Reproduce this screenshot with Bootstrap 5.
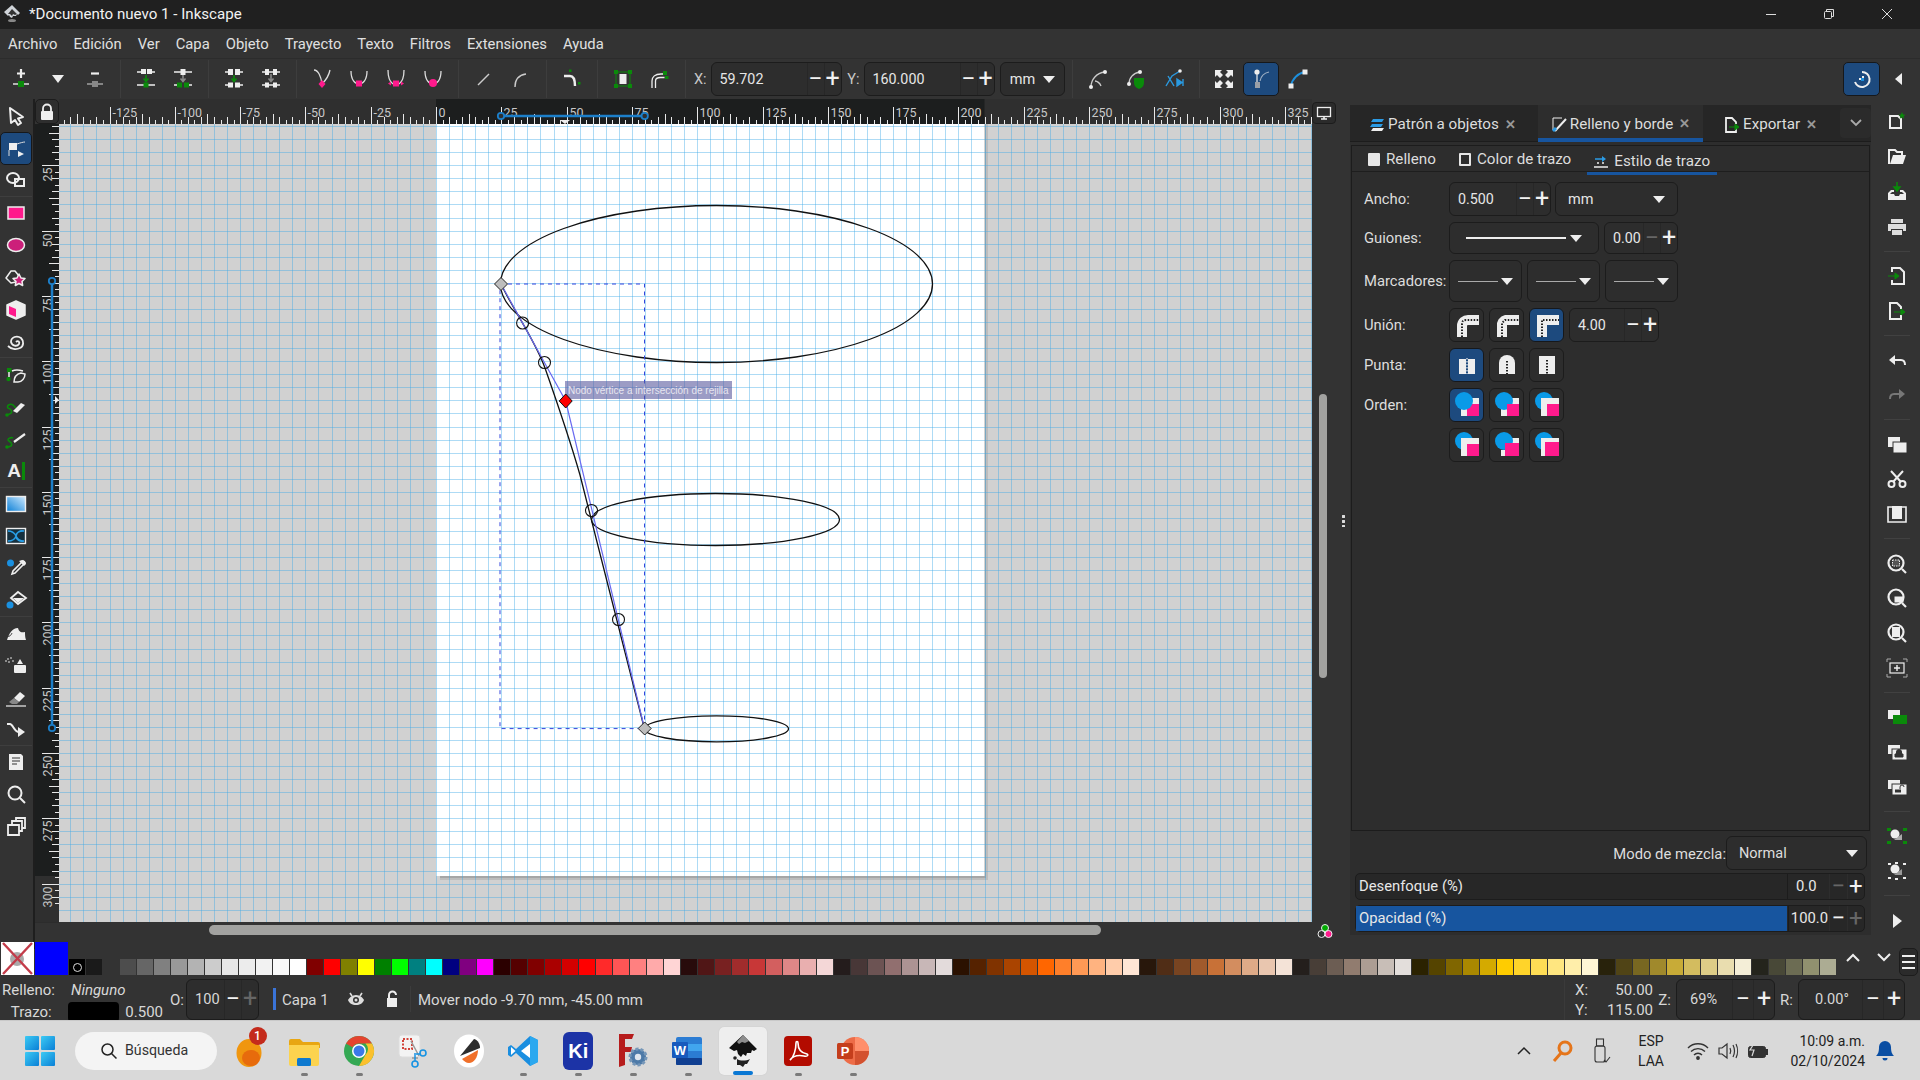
<!DOCTYPE html>
<html lang="es">
<head>
<meta charset="UTF-8">
<title>*Documento nuevo 1 - Inkscape</title>
<link href="https://cdn.jsdelivr.net/npm/bootstrap@5.3.0/dist/css/bootstrap.min.css" rel="stylesheet">
<style>
html, body { margin: 0; height: 1080px; overflow: hidden; }
body { width: 1920px; background: #333; color: #e6e6e6; font-family: Roboto, "Liberation Sans", sans-serif; font-size: 14px; line-height: 1.2; }
svg { display: block; flex: none; }
.app { width: 1920px; height: 1080px; }
.titlebar { height: 29px; background: #202020; color: #f2f2f2; padding: 0 4px 0 3px; }
.title-text { margin-left: 8px; font-size: 15.1px; }
.winctl { width: 58px; height: 28px; }
.menubar { height: 30px; padding: 2px 0 0 8px; background: #333; gap: 16px; font-size: 14.8px; color: #e0e0e0; }
.cmdbar { height: 41px; padding-left: 2.5px; background: #333; border-top: 1px solid #2c2c2c; }
.cbtn { width: 37px; height: 34px; border-radius: 5px; flex: none; }
.cbtn.on, .tool.on, .ibtn.on { background: #1d4a7e; border: 1px solid #16181b; }
.csep { width: 1px; height: 38px; margin: 0 6.5px; background: #3d3d3d; flex: none; }
.clabel { color: #c8c8c8; font-size: 14.5px; text-align: right; padding-top: 1px; }
.spin { height: 34px; background: #2d2d2d; border: 1px solid #1c1c1c; border-radius: 6px; font-size: 14.3px; flex: none; }
.spin .val { flex: 1 1 auto; padding: 1px 0 0 8px; }
.spin .val.zoomval { padding-left: 13px; }
.spin i, .slide i { font-style: normal; display: flex; align-items: center; justify-content: center; width: 17px; height: 100%; border-left: 1px solid #272727; font-size: 25px; font-weight: 400; color: #f2f2f2; flex: none; }
.spin i.off, .slide i.off { color: #666; }
.drop { height: 34px; background: #2d2d2d; border: 1px solid #1c1c1c; border-radius: 6px; font-size: 14.5px; flex: none; }
.caret { width: 0; height: 0; border-left: 6px solid transparent; border-right: 6px solid transparent; border-top: 7px solid #eee; flex: none; }
.mainrow { height: 850px; }
.toolstrip { width: 35px; padding: 1px 1px 0 0; background: #333; border-right: 2px solid #1e1e1e; flex: none; }
.tool { width: 32px; height: 32.3px; flex: none; border-radius: 5px; }
.tool.sep { border-bottom: 1px solid #3e3e3e; border-radius: 0; }
.tool.txt { font: bold 19px "Liberation Sans", sans-serif; color: #eee; gap: 1px; }
.tool.txt b { width: 3px; height: 18px; background: #0a8a0a; }
.workarea { width: 1315px; display: grid; grid-template-columns: 24px 1253px 38px; grid-template-rows: 25px 798px 27px; flex: none; }
.cornerlock { background: #2e2e2e; border: 1px solid #1c1c1c; border-radius: 5px; }
.vbar { background: #333; position: relative; }
.vthumb { width: 8px; height: 284px; margin: 270px 0 0 7px; background: #a2a2a0; border-radius: 4px; }
.dots { position: absolute; right: 5px; top: 390px; width: 3px; height: 13px; background: radial-gradient(circle, #ddd 1.4px, transparent 1.6px) 0 0 / 3px 5px; }
.monbtn { width: 24px; height: 22px; margin-top: 3px; background: #2b2b2b; border: 1px solid #1c1c1c; border-radius: 4px; }
.hbar { background: #333; }
.hthumb { width: 892px; height: 10px; margin: 3px 0 0 150px; background: #a2a2a0; border-radius: 5px; }
.panel { width: 521px; height: 830px; margin-top: 6px; background: #2d2d2d; flex: none; }
.ptabs { height: 37px; background: #262626; border-bottom: 1px solid #1c1c1c; font-size: 15.2px; position: relative; flex: none; }
.ptab { height: 37px; padding-top: 2px; gap: 3px; color: #ddd; }
.ptab.now { border-bottom: 4px solid #17559f; background: #2d2d2d; padding-top: 5px; }
.xmark { color: #999; font-size: 13px; font-weight: 700; margin-left: 3px; }
.pmore { width: 31px; height: 30px; background: #2b2b2b; border-radius: 4px; margin: 3px 0 0 auto; }
.subbox { height: 686px; margin: 3px 1px 0 1px; border: 1px solid #1c1c1c; flex: none; }
.subtabs { height: 26px; border-bottom: 1px solid #1e1e1e; font-size: 15.2px; padding: 2px 0 0 16px; color: #ddd; }
.subtab { gap: 6px; height: 26px; margin-right: 23px; }
.subtab.now { border-bottom: 3px solid #17559f; padding: 3px 7px 0 7px; margin: 0 0 -3px -7px; height: 28px; }
.chk { width: 12px; height: 13px; border: 2px solid #e6e6e6; border-radius: 1px; }
.chk.full { background: #e6e6e6; }
.frm { padding: 10px 0 0 12px; gap: 6px; }
.frow { gap: 5px; font-size: 14.8px; }
.flabel { width: 80px; color: #ddd; padding-top: 2px; }
.ibtn { width: 35px; height: 34px; background: #2d2d2d; border: 1px solid #1c1c1c; border-radius: 6px; flex: none; }
.ibtn.on { background: #1d4a7e; }
.dline { flex: none; background: #eee; }
.dline.thin { background: #aaa; }
.modorow { height: 34px; margin-top: 5px; padding-right: 4px; font-size: 14.8px; color: #ddd; justify-content: flex-end; flex: none; }
.modorow > span { padding-top: 3px; }
.drop > .ps-1 { padding-top: 1px; }
.sliders { padding: 3px 6px 0 5px; gap: 5px; }
.slide { height: 27px; border: 1px solid #1c1c1c; border-radius: 5px; background: #272727; font-size: 14.8px; color: #e8e8e8; }
.slide .fill { width: 431px; height: 100%; flex: none; padding-left: 3px; }
.slide .fill.blue { background: #17559f; margin-right: 1px; }
.slide .num { width: 43px; flex: 1 1 auto; padding-right: 1px; border-left: 1px solid #1c1c1c; height: 100%; }
.slide i { width: 17.5px; border-left-color: #2d2d2d; font-size: 24px; }
.rstrip { width: 49px; padding: 6px 0 0 2px; background: #333; flex: none; }
.rbtn { width: 47px; height: 34.8px; flex: none; }
.rsep { width: 26px; height: 1px; margin: 6.8px 0; background: #414141; flex: none; }
.palette { height: 28px; background: #333; flex: none; }
.xswatch { width: 33px; height: 33px; margin: -7px 0 0 1px; background: #fff; flex: none; }
.bswatch { width: 33px; height: 33px; margin: -7px 0 0 1px; background: #00f; flex: none; }
.swatches { margin: 10px 0 0 1px; width: 1768px; height: 16px; flex: none; }
.swatches span { display: block; width: 16px; height: 16px; margin-right: 1px; flex: none; }
.swatches span:first-child { display: flex; align-items: center; justify-content: center; }
.ring { width: 9px; height: 9px; border: 1px solid #ddd; border-radius: 50%; }
.palarrow { width: 31px; }
.palmenu { width: 19px; height: 28px; margin-top: -1px; background: #2b2b2b; border: 1px solid #1c1c1c; border-radius: 5px; }
.statusbar { height: 43px; background: #333; font-size: 15px; color: #d8d8d8; border-top: 1px solid #333; flex: none; }
.statusbar > span { padding-top: 2px; }
.st-fill { width: 163px; position: relative; padding-top: 4px; }
.st-line { height: 22px; }
.st-label { width: 55px; text-align: right; margin-right: 16px; }
.stroke-sw { width: 55px; height: 20px; background: #000; border-radius: 4px; margin-right: 6px; }
.statusbar .spin { height: 41px; font-size: 14.6px; }
.layerbar { width: 3px; height: 22px; background: #3a74d8; margin: 0 6px 0 14px; }
.st-coords { width: 89px; padding: 2px 0 0 10px; border-left: 1px solid #3a3a3a; height: 41px; }
.taskbar { height: 60px; background: #d9d9d9; color: #1c1c1c; border-top: 1px solid #c9c9c9; position: relative; flex: none; }
.winlogo { width: 30px; height: 30px; margin: 0 20px 0 25px; display: grid; grid-template-columns: 14px 14px; gap: 2px; }
.winlogo span { background: linear-gradient(135deg, #3ccbf4, #0a7fd6); border-radius: 1px; }
.searchpill { width: 142px; height: 38px; background: #f4f4f4; border-radius: 19px; gap: 7px; padding-left: 25px; font-size: 14.2px; color: #333; margin-right: 4.500px; }
.tslot { width: 54.9px; height: 60px; position: relative; flex: none; }
.tslot.now { background: #eee; border-radius: 5px; height: 48px; width: 48px; margin: 0 3.45px; box-shadow: 0 0 1px #bbb; }
.tdot { position: absolute; left: 50%; bottom: 5px; width: 7px; height: 3px; margin-left: -3px; background: #7a7a7a; border-radius: 2px; }
.tslot.now .tdot { bottom: 0; width: 20px; height: 4px; margin-left: -10px; background: #0a78d4; }
.tbadge { position: absolute; left: 27px; top: 6px; width: 18px; height: 18px; border-radius: 50%; background: #c42b1c; color: #fff; font-size: 12px; font-weight: 500; text-align: center; line-height: 18px; }
.tray { margin-left: auto; }
.trayslot { height: 60px; }
.langs { width: 60px; font-size: 14px; line-height: 20px; text-align: center; color: #222; }
.clock { width: 95px; padding-right: 3px; text-align: right; font-size: 14px; line-height: 20px; color: #222; }
</style>
</head>
<body>
<div class="app d-flex flex-column">

  <!-- barra de titulo -->
  <div class="titlebar d-flex align-items-center">
    <svg width="18" height="20" viewBox="0 0 18 20"><path d="M9 1l8 8-2 2-1-1-1 2-3 0-1 2-2-1-1-2-1 1-4-4z" fill="#cfd3d8"/><path d="M9 5l5 5-2 1-2-1-1 2-2-2-2 0z" fill="#333"/><ellipse cx="9" cy="16.5" rx="4" ry="1.6" fill="#888"/></svg>
    <span class="title-text flex-grow-1">*Documento nuevo 1 - Inkscape</span>
    <div class="winctl d-flex align-items-center justify-content-center"><svg width="12" height="12"><path d="M1 6.5h10" stroke="#ddd"/></svg></div>
    <div class="winctl d-flex align-items-center justify-content-center"><svg width="12" height="12" fill="none" stroke="#ddd"><rect x="1.5" y="3.5" width="7" height="7" rx="1"/><path d="M3.5 3V1.5h7v7H9"/></svg></div>
    <div class="winctl d-flex align-items-center justify-content-center"><svg width="12" height="12" stroke="#ddd"><path d="M1 1l10 10M11 1L1 11"/></svg></div>
  </div>

  <!-- menu -->
  <div class="menubar d-flex align-items-center">
    <span>Archivo</span><span>Edición</span><span>Ver</span><span>Capa</span><span>Objeto</span><span>Trayecto</span><span>Texto</span><span>Filtros</span><span>Extensiones</span><span>Ayuda</span>
  </div>

  <!-- barra de herramientas de nodos -->
  <div class="cmdbar d-flex align-items-center">
    <div class="cbtn d-flex align-items-center justify-content-center"><svg width="24" height="24"><path d="M12 2v9M8 6.5h8" stroke="#eee" stroke-width="2.2"/><path d="M4 17h16" stroke="#eee" stroke-width="1.4"/><rect x="9" y="14" width="6" height="6" fill="#0a8a0a"/></svg></div>
    <div class="cbtn d-flex align-items-center justify-content-center"><svg width="14" height="10"><path d="M1 1h12L7 9z" fill="#eee"/></svg></div>
    <div class="cbtn d-flex align-items-center justify-content-center"><svg width="24" height="24"><path d="M8 6.5h8" stroke="#eee" stroke-width="2.2"/><path d="M4 17h16" stroke="#aaa" stroke-width="1.4"/><rect x="9" y="14" width="6" height="6" fill="#888"/></svg></div>
    <div class="csep"></div>
    <div class="cbtn d-flex align-items-center justify-content-center"><svg width="24" height="24"><path d="M3 5h6M15 5h6M3 18h18" stroke="#eee" stroke-width="1.4"/><rect x="7" y="2" width="5" height="5" fill="#eee"/><rect x="13" y="2" width="5" height="5" fill="#eee"/><path d="M12 8v6M9.5 11.5L12 14.5l2.500-3" stroke="#0a8a0a" stroke-width="1.6" fill="none"/><rect x="9.500" y="15.500" width="5" height="5" fill="#0a8a0a"/></svg></div>
    <div class="cbtn d-flex align-items-center justify-content-center"><svg width="24" height="24"><path d="M3 5h18M3 18h6M15 18h6" stroke="#eee" stroke-width="1.4"/><rect x="9.500" y="2" width="5" height="6" fill="#eee"/><path d="M12 8v6M9.500 11.500L12 14.500l2.500-3" stroke="#888" stroke-width="1.600" fill="none"/><rect x="6" y="15.500" width="5" height="5" fill="#0a8a0a"/><rect x="13" y="15.500" width="5" height="5" fill="#0a8a0a"/></svg></div>
    <div class="csep"></div>
    <div class="cbtn d-flex align-items-center justify-content-center"><svg width="24" height="24"><path d="M3 5h6M15 5h6M3 18h6M15 18h6" stroke="#eee" stroke-width="1.4"/><rect x="6" y="2" width="5" height="6" fill="#eee"/><rect x="13" y="2" width="5" height="6" fill="#eee"/><path d="M12 8v6M9.500 11.500L12 14.500l2.500-3" stroke="#0a8a0a" stroke-width="1.600" fill="none"/><rect x="6" y="15.500" width="5" height="5" fill="#eee"/><rect x="13" y="15.500" width="5" height="5" fill="#eee"/></svg></div>
    <div class="cbtn d-flex align-items-center justify-content-center"><svg width="24" height="24"><path d="M3 5h18M3 18h18" stroke="#eee" stroke-width="1.4"/><rect x="6" y="2" width="4" height="6" fill="#eee"/><rect x="14" y="2" width="4" height="6" fill="#eee"/><path d="M12 7v7M9.500 11.500L12 14.500l2.500-3" stroke="#888" stroke-width="1.600" fill="none"/><rect x="6" y="15.500" width="4" height="5" fill="#eee"/><rect x="14" y="15.500" width="4" height="5" fill="#eee"/></svg></div>
    <div class="csep"></div>
    <div class="cbtn d-flex align-items-center justify-content-center"><svg width="24" height="24" fill="none" stroke="#ddd" stroke-width="1.300"><path d="M4 3c4 0 7 6 8 14M20 3c-1 5-4 10-8 14"/><path d="M12 13l3.500 4-3.500 4-3.500-4z" fill="#ff1a8c" stroke="none"/></svg></div>
    <div class="cbtn d-flex align-items-center justify-content-center"><svg width="24" height="24" fill="none" stroke="#ddd" stroke-width="1.300"><path d="M4 4c0 9 4 13 8 13s8-4 8-13"/><rect x="9" y="13.500" width="6" height="6" fill="#ff1a8c" stroke="none"/></svg></div>
    <div class="cbtn d-flex align-items-center justify-content-center"><svg width="24" height="24" fill="none" stroke="#ddd" stroke-width="1.300"><path d="M4 3c0 8 2 12 5 14M20 3c0 8-2 12-5 14"/><rect x="9" y="13.500" width="6" height="6" fill="#ff1a8c" stroke="none"/><path d="M4 16.500l3-2v4zM20 16.500l-3-2v4z" fill="#ff1a8c" stroke="none"/></svg></div>
    <div class="cbtn d-flex align-items-center justify-content-center"><svg width="24" height="24" fill="none" stroke="#ddd" stroke-width="1.300"><path d="M4 4c0 9 4 13 8 13s8-4 8-13"/><circle cx="12" cy="16" r="4" fill="#ff1a8c" stroke="none"/></svg></div>
    <div class="csep"></div>
    <div class="cbtn d-flex align-items-center justify-content-center"><svg width="24" height="24"><path d="M6 18L17 7" stroke="#ccc" stroke-width="1.400"/></svg></div>
    <div class="cbtn d-flex align-items-center justify-content-center"><svg width="24" height="24" fill="none"><path d="M6 20c0-8 4-12 11-13" stroke="#ccc" stroke-width="1.400"/></svg></div>
    <div class="csep"></div>
    <div class="cbtn d-flex align-items-center justify-content-center"><svg width="24" height="24" fill="none"><path d="M4 9h6c3 0 5 3 5 10" stroke="#eee" stroke-width="2.400"/><rect x="9" y="2.500" width="2.500" height="2.500" fill="#0a8a0a"/><rect x="18" y="15" width="2.500" height="2.500" fill="#0a8a0a"/></svg></div>
    <div class="csep"></div>
    <div class="cbtn d-flex align-items-center justify-content-center"><svg width="24" height="24"><rect x="5" y="5" width="14" height="14" fill="none" stroke="#0a8a0a" stroke-width="1"/><rect x="8.500" y="7" width="7" height="10" fill="#eee"/><g fill="#0a8a0a"><rect x="3" y="3" width="4" height="4"/><rect x="17" y="3" width="4" height="4"/><rect x="3" y="17" width="4" height="4"/><rect x="17" y="17" width="4" height="4"/></g></svg></div>
    <div class="cbtn d-flex align-items-center justify-content-center"><svg width="24" height="24" fill="none" stroke="#eee" stroke-width="1.300"><path d="M4 21v-7c0-4 3-7 9-7h4M7.500 21v-7c0-2 2-3.500 5-3.500h4"/><rect x="15" y="4" width="4" height="4" fill="#0a8a0a" stroke="none"/><rect x="17" y="9" width="3.500" height="3" fill="#0a8a0a" stroke="none"/></svg></div>
    <div class="csep"></div>
    <span class="clabel me-1" style="width:14px">X:</span>
    <div class="spin d-flex align-items-center" style="width:131px"><span class="val">59.702</span><i>−</i><i>+</i></div>
    <span class="clabel pe-1" style="width:22px">Y:</span>
    <div class="spin d-flex align-items-center" style="width:131px"><span class="val">160.000</span><i>−</i><i>+</i></div>
    <div class="drop d-flex align-items-center justify-content-center gap-2" style="width:65px;margin-left:5.5px">mm <span class="caret"></span></div>
    <div class="csep"></div>
    <div class="cbtn d-flex align-items-center justify-content-center" style="width:38px"><svg width="24" height="24" fill="none" stroke="#ccc" stroke-width="1.300"><path d="M5 20c0-7 5-14 14-15M9 14c2 0 5 2 6 5"/><circle cx="5" cy="20" r="2" fill="#eee" stroke="none"/><circle cx="19" cy="5" r="2" fill="#eee" stroke="none"/></svg></div>
    <div class="cbtn d-flex align-items-center justify-content-center" style="width:38px"><svg width="24" height="24" fill="none" stroke="#ccc" stroke-width="1.300"><path d="M5 17c0-6 4-11 11-12"/><circle cx="5" cy="17" r="2" fill="#eee" stroke="none"/><circle cx="16" cy="5" r="2" fill="#eee" stroke="none"/><path d="M10 11h10v5c0 3-2 5-5 6-3-1-5-3-5-6z" fill="#0a8a0a" stroke="none"/></svg></div>
    <div class="cbtn d-flex align-items-center justify-content-center" style="width:38px"><svg width="24" height="24" fill="none" stroke="#2a9ae0" stroke-width="1.400"><path d="M4 19l6-10 8-5M6 9l6 10"/><circle cx="18" cy="4" r="1.800" fill="#eee" stroke="none"/><path d="M15 12v7l5-3.500zM21 12v7" fill="#2a9ae0"/></svg></div>
    <div class="csep" style="margin-left:6px"></div>
    <div class="cbtn d-flex align-items-center justify-content-center" style="width:35px"><svg width="22" height="22" fill="#eee"><path d="M2 2h7L7 4l3 3-3 3-3-3-2 2zM20 2v7l-2-2-3 3-3-3 3-3-2-2zM2 20v-7l2 2 3-3 3 3-3 3 2 2zM20 20h-7l2-2-3-3 3-3 3 3 2-2z"/></svg></div>
    <div class="cbtn on d-flex align-items-center justify-content-center" style="width:36px;margin-left:1.5px"><svg width="24" height="24" fill="none"><path d="M11 14c1-5 4-8 9-9" stroke="#9fb0c4" stroke-width="1.200"/><circle cx="8" cy="5" r="2.600" fill="#eee"/><path d="M8 6v10" stroke="#eee" stroke-width="1.200"/><rect x="6" y="15" width="5" height="6" fill="#9a9fa6"/></svg></div>
    <div class="cbtn d-flex align-items-center justify-content-center"><svg width="24" height="24" fill="none"><path d="M5 19c1-7 7-13 14-14" stroke="#1d8fdc" stroke-width="1.800"/><rect x="2.500" y="16.500" width="5" height="5" fill="#eee"/><rect x="16.500" y="2.500" width="5" height="5" fill="#eee"/></svg></div>
    <div class="flex-grow-1"></div>
    <div class="cbtn on d-flex align-items-center justify-content-center"><svg width="22" height="22" fill="none"><path d="M11 4a7.500 7.500 0 1 1-7 10" stroke="#eee" stroke-width="2"/><path d="M8 11h4v-3" stroke="#eee" stroke-width="2"/><rect x="10" y="10" width="3" height="3" fill="#1d8fdc"/></svg></div>
    <div class="cbtn d-flex align-items-center justify-content-center" style="margin-right:3px"><svg width="10" height="12"><path d="M8 0v12L1 6z" fill="#eee"/></svg></div>
  </div>

  <div class="mainrow d-flex">
    <!-- herramientas -->
    <div class="toolstrip d-flex flex-column align-items-center">
      <div class="tool d-flex align-items-center justify-content-center"><svg width="22" height="22" fill="none" stroke="#eee" stroke-width="2" stroke-linejoin="round"><path d="M5 3l13 9-5 1.500 3 4.500-3 2-3-5-4 3z"/></svg></div>
      <div class="tool on d-flex align-items-center justify-content-center"><svg width="24" height="22" fill="none"><rect x="5" y="6" width="8" height="7" fill="#eee"/><path d="M13 7c3-1 6-2 8-2M5 13v6" stroke="#ddd"/><path d="M14 14l6 3-6 3z" fill="#eee"/></svg></div>
      <div class="tool sep d-flex align-items-center justify-content-center"><svg width="24" height="22" fill="none" stroke="#eee" stroke-width="2"><ellipse cx="9" cy="9" rx="6" ry="5"/><rect x="11" y="10" width="9" height="7"/></svg></div>
      <div class="tool d-flex align-items-center justify-content-center"><svg width="22" height="22"><rect x="3" y="5" width="16" height="12" fill="#ff1a8c" stroke="#eee" stroke-width="1.500"/></svg></div>
      <div class="tool d-flex align-items-center justify-content-center"><svg width="22" height="22"><ellipse cx="11" cy="11" rx="8.500" ry="6.500" fill="#cc1f7a" stroke="#eee" stroke-width="1.500"/></svg></div>
      <div class="tool d-flex align-items-center justify-content-center"><svg width="24" height="22" stroke="#eee" stroke-width="1.500" stroke-linejoin="round"><path d="M7 4l4 0 4 5-3 6-5 1-5-5z" fill="none"/><path d="M15 7l2 4 4 .5-3 3 .7 4-3.700-2-3.700 2 .7-4-3-3 4-.5z" fill="#cc1f7a"/></svg></div>
      <div class="tool d-flex align-items-center justify-content-center"><svg width="22" height="22" stroke="#eee" stroke-width="1.500" stroke-linejoin="round"><path d="M11 2l9 4v10l-9 4-9-4V6z" fill="#eee"/><path d="M11 10L4 7v8l7 3z" fill="#ff1a8c" stroke="none"/><path d="M11 10l7-3v8l-7 3z" fill="#eee" stroke="none"/></svg></div>
      <div class="tool sep d-flex align-items-center justify-content-center"><svg width="22" height="22" fill="none" stroke="#eee" stroke-width="1.800"><path d="M11 11c2-2 4 0 3 2-2 3-7 2-8-2 0-5 6-7 10-4 3 3 3 8-1 10-4 2-9 1-12-2"/></svg></div>
      <div class="tool d-flex align-items-center justify-content-center"><svg width="24" height="22" fill="none" stroke="#eee" stroke-width="1.500"><rect x="3" y="4" width="4.500" height="4.500" fill="#0a8a0a" stroke="none"/><circle cx="4.500" cy="15" r="2.200" fill="#0a8a0a" stroke="none"/><path d="M5 8v5M8 7c4-2 8-1 11 0"/><path d="M10 18c0-5 3-8 7-9l4 1c0 4-3 8-7 8z"/></svg></div>
      <div class="tool d-flex align-items-center justify-content-center"><svg width="24" height="22" fill="none"><path d="M3 19c8-2 4-6 1-7-2-2 2-5 5-3l3 3" stroke="#0a8a0a" stroke-width="1.600"/><circle cx="3" cy="19" r="1.800" fill="#0a8a0a"/><path d="M9 15l8-8 4 2-8 8z" fill="#eee"/></svg></div>
      <div class="tool d-flex align-items-center justify-content-center"><svg width="24" height="22" fill="none"><path d="M3 19c7-1 5-4 2-6s2-4 4-3" stroke="#0a8a0a" stroke-width="1.600"/><circle cx="3" cy="19" r="1.800" fill="#0a8a0a"/><path d="M10 14L21 6" stroke="#eee" stroke-width="2.200"/></svg></div>
      <div class="tool sep txt d-flex align-items-center justify-content-center">A<b></b></div>
      <div class="tool d-flex align-items-center justify-content-center"><svg width="24" height="20"><defs><linearGradient id="gr1" x1="0" y1="1" x2="1" y2="0"><stop offset="0" stop-color="#0a7fd6"/><stop offset="1" stop-color="#cfeaff"/></linearGradient></defs><rect x="2.500" y="2.500" width="19" height="15" fill="url(#gr1)" stroke="#eee" stroke-width="1.400"/></svg></div>
      <div class="tool d-flex align-items-center justify-content-center"><svg width="24" height="20"><rect x="2.500" y="2.500" width="19" height="15" fill="#15303f" stroke="#eee" stroke-width="1.400"/><path d="M4 5c5 0 7 3 8 5s4 5 8 5c-4 1-8-1-8-5 0-4 4-5 8-5-4-1-7 1-8 5-1 3-4 5-8 5" fill="none" stroke="#29a0e8" stroke-width="1.400"/></svg></div>
      <div class="tool d-flex align-items-center justify-content-center"><svg width="24" height="22"><circle cx="6.500" cy="6" r="3.500" fill="#1a90e0"/><path d="M19 4l2 2-3 3-7 7-3 1 1-3 7-7z" fill="none" stroke="#eee" stroke-width="1.600"/><path d="M15 4l5 5 2-2-1-3-3-1z" fill="#eee"/></svg></div>
      <div class="tool sep d-flex align-items-center justify-content-center"><svg width="24" height="22"><circle cx="6" cy="16" r="3.500" fill="#1a90e0"/><path d="M14 3l8 6-8 6-7-6z" fill="none" stroke="#eee" stroke-width="1.800"/><path d="M9 9h11l-6 5z" fill="#eee"/></svg></div>
      <div class="tool d-flex align-items-center justify-content-center"><svg width="24" height="22"><path d="M3 18c2-6 5-12 11-12 1 3 2 5 7 4 0 3 0 5 1 8z" fill="#eee"/><path d="M3 14c3 1 4-1 5-3" stroke="#333" fill="none"/></svg></div>
      <div class="tool d-flex align-items-center justify-content-center"><svg width="24" height="22"><rect x="10" y="11" width="12" height="8" rx="1" fill="#eee"/><path d="M13 10l3-5 3 5z" fill="#eee"/><g fill="#aaa"><circle cx="4" cy="5" r="1"/><circle cx="7" cy="4" r="1"/><circle cx="9" cy="7" r="1"/><circle cx="5" cy="8" r="1"/><circle cx="2" cy="7" r="1"/></g></svg></div>
      <div class="tool d-flex align-items-center justify-content-center"><svg width="24" height="22"><path d="M10 11l6-6 5 4-6 6z" fill="#eee"/><path d="M10 11l5 4-2 2H8l-3-2z" fill="#888"/><path d="M2 19h20" stroke="#eee" stroke-width="1.200"/></svg></div>
      <div class="tool sep d-flex align-items-center justify-content-center"><svg width="24" height="22" fill="none"><path d="M3 6h3c3 0 4 8 9 8" stroke="#eee" stroke-width="2"/><path d="M14 9l7 5-7 5z" fill="#eee"/></svg></div>
      <div class="tool d-flex align-items-center justify-content-center"><svg width="22" height="22"><path d="M4 3h12l2 2v14H4z" fill="#eee"/><path d="M7 7h8M7 10h8M7 13h5" stroke="#333" stroke-width="1.200"/></svg></div>
      <div class="tool d-flex align-items-center justify-content-center"><svg width="22" height="22" fill="none" stroke="#eee" stroke-width="2"><circle cx="10" cy="10" r="6.500"/><path d="M15 15l5 5"/></svg></div>
      <div class="tool d-flex align-items-center justify-content-center"><svg width="22" height="22" fill="none" stroke="#eee" stroke-width="1.800"><path d="M3 9h11v10H3zM7 9V5h10v10h-3M11 5V2h9v10h-3"/></svg></div>
    </div>

    <!-- lienzo con reglas -->
    <div class="workarea">
      <div class="cornerlock d-flex align-items-center justify-content-center"><svg width="16" height="18"><path d="M4 9V5.500a4 4 0 0 1 8 0V9" fill="none" stroke="#eee" stroke-width="1.800"/><rect x="2" y="8" width="12" height="9" rx="1" fill="#eee"/></svg></div>
      <svg id="hruler" width="1253" height="25"></svg>
      <div class="d-flex"><div class="monbtn d-flex align-items-center justify-content-center"><svg width="16" height="15" fill="none"><rect x="1.500" y="1.500" width="13" height="9" stroke="#eee" stroke-width="1.300"/><path d="M5 13h6M8 11v2" stroke="#eee" stroke-width="1.600"/></svg></div></div>
      <svg id="vruler" width="24" height="798"></svg>
      <svg id="canvas" width="1253" height="798" viewBox="59 125 1253 798"></svg>
      <div class="vbar"><div class="vthumb"></div><div class="dots"></div></div>
      <div style="background:#333;border-top:1px solid #2c2c2c"></div>
      <div class="hbar"><div class="hthumb"></div></div>
      <div class="hbar d-flex"><svg class="ms-1" style="margin-top:1px" width="18" height="18"><circle cx="9" cy="5" r="3.500" fill="#0a0" stroke="#eee"/><circle cx="5.500" cy="11" r="3.500" fill="none" stroke="#eee"/><circle cx="12.500" cy="11" r="3.500" fill="#ff1a8c" stroke="#eee"/></svg></div>
    </div>

    <!-- panel -->
    <div class="panel d-flex flex-column">
      <div class="ptabs d-flex nav">
        <div class="ptab d-flex align-items-center" style="margin-left:19px;width:169px"><svg width="16" height="14"><path d="M4 1h11l-2 3H2zM3 6h11l-2 3H1z" fill="#2b9be5"/><path d="M4 10h11l-2 3H2z" fill="#eee"/></svg><span>Patrón a objetos</span><span class="xmark">✕</span></div>
        <div class="ptab now d-flex align-items-center justify-content-center" style="width:165px"><svg width="16" height="16" fill="none"><path d="M2 14V2h9" stroke="#eee"/><path d="M4 15L15 3" stroke="#eee" stroke-width="2"/><path d="M2 15l3-3" stroke="#2b9be5" stroke-width="3"/></svg><span>Relleno y borde</span><span class="xmark">✕</span></div>
        <div class="ptab d-flex align-items-center" style="margin-left:21px"><svg width="16" height="18" fill="none"><path d="M12 12v4H2V2h6l4 4v2" stroke="#eee" stroke-width="1.800"/><path d="M5 11h9M11 8l4 3-4 3z" stroke="#0a8a0a" fill="#0a8a0a"/></svg><span>Exportar</span><span class="xmark">✕</span></div>
        <div class="pmore d-flex align-items-center justify-content-center"><svg width="14" height="10" fill="none"><path d="M2 2l5 5 5-5" stroke="#aaa" stroke-width="1.800"/></svg></div>
      </div>
      <div class="subbox">
        <div class="subtabs d-flex align-items-center">
          <div class="subtab d-flex align-items-center"><span class="chk full"></span><span>Relleno</span></div>
          <div class="subtab d-flex align-items-center"><span class="chk"></span><span>Color de trazo</span></div>
          <div class="subtab now d-flex align-items-center"><svg width="14" height="14" fill="none"><path d="M1 5h9" stroke="#2b9be5" stroke-width="1.500"/><path d="M8 2l4 3-4 3z" fill="#2b9be5"/><path d="M3 9h2M8 9h2" stroke="#eee" stroke-width="1.500"/><path d="M0 13h14" stroke="#eee" stroke-width="1.500"/></svg><span>Estilo de trazo</span></div>
        </div>
        <div class="frm d-flex flex-column">
          <div class="frow d-flex align-items-center"><span class="flabel">Ancho:</span>
            <div class="spin d-flex align-items-center" style="width:102px"><span class="val">0.500</span><i>−</i><i>+</i></div>
            <div class="drop d-flex align-items-center justify-content-between px-2" style="width:123px;margin-left:-1px"><span class="ps-1">mm</span><span class="caret me-1"></span></div>
          </div>
          <div class="frow d-flex align-items-center"><span class="flabel">Guiones:</span>
            <div class="drop d-flex align-items-center justify-content-between px-3" style="width:150px;height:32px"><span class="dline" style="width:100px;height:2px"></span><span class="caret"></span></div>
            <div class="spin d-flex align-items-center" style="width:74px;height:32px"><span class="val">0.00</span><i class="off">−</i><i>+</i></div>
          </div>
          <div class="frow d-flex align-items-center"><span class="flabel">Marcadores:</span>
            <div class="drop d-flex align-items-center justify-content-between px-2" style="width:73px;height:42px"><span class="dline thin" style="width:40px;height:1px"></span><span class="caret"></span></div>
            <div class="drop d-flex align-items-center justify-content-between px-2" style="width:73px;height:42px"><span class="dline thin" style="width:40px;height:1px"></span><span class="caret"></span></div>
            <div class="drop d-flex align-items-center justify-content-between px-2" style="width:73px;height:42px"><span class="dline thin" style="width:40px;height:1px"></span><span class="caret"></span></div>
          </div>
          <div class="frow d-flex align-items-center"><span class="flabel">Unión:</span>
            <div class="ibtn d-flex align-items-center justify-content-center"><svg width="24" height="24" fill="none"><path d="M7 24V13c0-4 3-6 6-6h11" stroke="#eee" stroke-width="10"/><path d="M7 24V11q0-4 4-4h13" stroke="#222" stroke-width="2" stroke-dasharray="1.500 1.500"/></svg></div>
            <div class="ibtn d-flex align-items-center justify-content-center"><svg width="24" height="24" fill="none"><path d="M7 24V10l3-3h14" stroke="#eee" stroke-width="10" stroke-linejoin="bevel"/><path d="M7 24V10l3-3h14" stroke="#222" stroke-width="2" stroke-dasharray="1.500 1.500"/></svg></div>
            <div class="ibtn on d-flex align-items-center justify-content-center"><svg width="24" height="24" fill="none"><path d="M7 24V7h17" stroke="#eee" stroke-width="10"/><path d="M7 24V7h17" stroke="#222" stroke-width="2" stroke-dasharray="1.500 1.500"/></svg></div>
            <div class="spin d-flex align-items-center" style="width:90px"><span class="val">4.00</span><i>−</i><i>+</i></div>
          </div>
          <div class="frow d-flex align-items-center"><span class="flabel">Punta:</span>
            <div class="ibtn on d-flex align-items-center justify-content-center"><svg width="24" height="24" fill="none"><path d="M4 6v15h7V6zM13 6h7v15h-7z" fill="#eee"/><path d="M12 5v16" stroke="#eee" stroke-width="1.200" stroke-dasharray="1.500 1.500"/></svg></div>
            <div class="ibtn d-flex align-items-center justify-content-center"><svg width="24" height="24"><path d="M4 21V10a8 8 0 0 1 16 0v11z" fill="#eee"/><path d="M12 8v13" stroke="#222" stroke-width="2" stroke-dasharray="1.500 1.500"/></svg></div>
            <div class="ibtn d-flex align-items-center justify-content-center"><svg width="24" height="24"><rect x="4" y="3" width="16" height="18" fill="#eee"/><path d="M12 7v14" stroke="#222" stroke-width="2" stroke-dasharray="1.500 1.500"/></svg></div>
          </div>
          <div class="frow d-flex align-items-center"><span class="flabel">Orden:</span>
            <div class="ibtn on d-flex align-items-center justify-content-center"><svg width="26" height="26"><rect x="7" y="6" width="18" height="18" fill="#eee"/><rect x="13" y="12" width="12" height="12" fill="#ff1a8c"/><circle cx="10" cy="9" r="9" fill="#0a9ae8"/></svg></div>
            <div class="ibtn d-flex align-items-center justify-content-center"><svg width="26" height="26"><rect x="7" y="6" width="18" height="18" fill="#eee"/><circle cx="10" cy="9" r="9" fill="#0a9ae8"/><rect x="13" y="12" width="12" height="12" fill="#ff1a8c"/></svg></div>
            <div class="ibtn d-flex align-items-center justify-content-center"><svg width="26" height="26"><circle cx="10" cy="9" r="9" fill="#0a9ae8"/><rect x="7" y="6" width="18" height="18" fill="#eee"/><rect x="13" y="12" width="12" height="12" fill="#ff1a8c"/></svg></div>
          </div>
          <div class="frow d-flex align-items-center"><span class="flabel"></span>
            <div class="ibtn d-flex align-items-center justify-content-center"><svg width="26" height="26"><circle cx="10" cy="9" r="9" fill="#0a9ae8"/><rect x="13" y="12" width="12" height="12" fill="#ff1a8c"/><path d="M7 6h18v6H13v12H7z" fill="#eee"/></svg></div>
            <div class="ibtn d-flex align-items-center justify-content-center"><svg width="26" height="26"><rect x="17" y="6" width="8" height="8" fill="#eee"/><circle cx="10" cy="9" r="9" fill="#0a9ae8"/><rect x="7" y="18" width="6" height="6" fill="#eee"/><rect x="11" y="11" width="14" height="13" fill="#ff1a8c"/></svg></div>
            <div class="ibtn d-flex align-items-center justify-content-center"><svg width="26" height="26"><circle cx="10" cy="9" r="9" fill="#0a9ae8"/><rect x="7" y="6" width="18" height="18" fill="#eee"/><rect x="11" y="10" width="14" height="14" fill="#ff1a8c"/></svg></div>
          </div>
        </div>
      </div>
      <div class="modorow d-flex align-items-center"><span>Modo de mezcla:</span>
        <div class="drop d-flex align-items-center justify-content-between ps-2 pe-2" style="width:141px"><span class="ps-1">Normal</span><span class="caret"></span></div>
      </div>
      <div class="sliders d-flex flex-column">
        <div class="slide d-flex align-items-center"><span class="fill d-flex align-items-center">Desenfoque (%)</span><span class="num d-flex align-items-center ps-2">0.0</span><i class="off">−</i><i>+</i></div>
        <div class="slide d-flex align-items-center"><span class="fill blue d-flex align-items-center">Opacidad (%)</span><span class="num d-flex align-items-center justify-content-end">100.0</span><i>−</i><i class="off">+</i></div>
      </div>
    </div>

    <!-- comandos -->
    <div class="rstrip d-flex flex-column align-items-center">
      <div class="rbtn d-flex align-items-center justify-content-center"><svg width="22" height="22" fill="none"><path d="M4 5h8l3 3v9H4z" stroke="#eee" stroke-width="2"/><path d="M16 1l1 2.500 2.500.2-2 1.600.8 2.400-2.300-1.400-2.300 1.400.8-2.400-2-1.600 2.500-.2z" fill="#0a8a0a"/></svg></div>
      <div class="rbtn d-flex align-items-center justify-content-center"><svg width="22" height="22" fill="none"><path d="M3 18V4h6l2 2h5v3" stroke="#eee" stroke-width="2"/><path d="M4 18l3-9h13l-3 9z" fill="#eee"/></svg></div>
      <div class="rbtn d-flex align-items-center justify-content-center"><svg width="22" height="22"><path d="M2 12l3-3h3v2H6l-2 2h4l1 2h4l1-2h4l-2-2h-2V9h3l3 3v7H2z" fill="#eee"/><path d="M11 1v8M8 6l3 4 3-4z" fill="#0a8a0a" stroke="#0a8a0a" stroke-width="1.500"/></svg></div>
      <div class="rbtn d-flex align-items-center justify-content-center"><svg width="22" height="22"><rect x="5" y="3" width="12" height="4" fill="#ddd"/><path d="M2 8h18v7h-3v-2H5v2H2z" fill="#ddd"/><rect x="6" y="14" width="10" height="5" fill="#ddd"/></svg></div>
      <div class="rsep"></div>
      <div class="rbtn d-flex align-items-center justify-content-center"><svg width="22" height="22" fill="none"><path d="M6 7V3h8l4 4v12H6v-4" stroke="#eee" stroke-width="2"/><path d="M2 11h10M9 8l4 3-4 3z" stroke="#0a8a0a" fill="#0a8a0a"/></svg></div>
      <div class="rbtn d-flex align-items-center justify-content-center"><svg width="22" height="22" fill="none"><path d="M15 15v4H4V3h7l4 4v2" stroke="#eee" stroke-width="2"/><path d="M8 12h10M15 9l4 3-4 3z" stroke="#0a8a0a" fill="#0a8a0a"/></svg></div>
      <div class="rsep"></div>
      <div class="rbtn d-flex align-items-center justify-content-center"><svg width="22" height="22" fill="none"><path d="M8 11h7c3 0 4 2 4 5" stroke="#eee" stroke-width="2"/><path d="M9 6l-6 5 6 5z" fill="#eee"/></svg></div>
      <div class="rbtn d-flex align-items-center justify-content-center"><svg width="22" height="22" fill="none"><path d="M14 10H8c-3 0-4 2-4 5" stroke="#777" stroke-width="2"/><path d="M13 5l6 5-6 5z" fill="#777"/></svg></div>
      <div class="rsep"></div>
      <div class="rbtn d-flex align-items-center justify-content-center"><svg width="22" height="22"><rect x="2" y="3" width="12" height="10" fill="#eee"/><rect x="7" y="8" width="14" height="11" fill="#eee" stroke="#333"/></svg></div>
      <div class="rbtn d-flex align-items-center justify-content-center"><svg width="22" height="22" fill="none" stroke="#eee" stroke-width="2"><circle cx="5.500" cy="16" r="3"/><circle cx="16.500" cy="16" r="3"/><path d="M7 14L17 3M15 14L5 3"/></svg></div>
      <div class="rbtn d-flex align-items-center justify-content-center"><svg width="22" height="22" fill="none"><path d="M6 4H2v15h18V4h-4" stroke="#eee" stroke-width="1.600"/><path d="M6 3h10v13H6z" fill="#eee"/></svg></div>
      <div class="rsep"></div>
      <div class="rbtn d-flex align-items-center justify-content-center"><svg width="22" height="22" fill="none" stroke="#eee" stroke-width="2.200"><circle cx="10" cy="10" r="7.500"/><path d="M16 16l4 4"/><rect x="6.500" y="7" width="7" height="6" stroke-width="1" stroke-dasharray="1.500 1" fill="#555"/></svg></div>
      <div class="rbtn d-flex align-items-center justify-content-center"><svg width="22" height="22" fill="none" stroke="#eee" stroke-width="2.200"><circle cx="10" cy="10" r="7.500"/><path d="M16 16l4 4"/><rect x="9" y="10" width="8" height="5" fill="#eee" stroke-width="1"/></svg></div>
      <div class="rbtn d-flex align-items-center justify-content-center"><svg width="22" height="22" fill="none" stroke="#eee" stroke-width="2.200"><circle cx="10" cy="10" r="7.500"/><path d="M16 16l4 4"/><rect x="6.500" y="5.500" width="7" height="9" fill="#eee" stroke-width="1"/></svg></div>
      <div class="rbtn d-flex align-items-center justify-content-center"><svg width="22" height="22" fill="none"><path d="M1 5V2h4M17 2h4v3M1 17v3h4M17 20h4v-3" stroke="#aaa"/><rect x="4" y="6" width="14" height="10" stroke="#eee" stroke-width="1.200"/><path d="M11 8v6M8 11h6" stroke="#eee" stroke-width="1.400"/></svg></div>
      <div class="rsep"></div>
      <div class="rbtn d-flex align-items-center justify-content-center"><svg width="22" height="22"><rect x="2" y="4" width="12" height="9" fill="#eee"/><rect x="7" y="9" width="14" height="9" fill="#0a8a0a"/></svg></div>
      <div class="rbtn d-flex align-items-center justify-content-center"><svg width="22" height="22"><rect x="2" y="4" width="12" height="9" fill="#eee"/><rect x="6" y="8" width="15" height="11" fill="#eee" stroke="#333"/><path d="M9 16v-3h8v3zM10.500 13v-2a2.500 2.500 0 0 1 5 0v2" fill="#333" stroke="#333"/></svg></div>
      <div class="rbtn d-flex align-items-center justify-content-center"><svg width="22" height="22"><rect x="2" y="4" width="12" height="9" fill="#eee"/><rect x="6" y="8" width="15" height="11" fill="#eee" stroke="#333"/><path d="M9 16.500v-3h6v3z" fill="#333"/><path d="M14 13v-2a2 2 0 0 1 4 0" fill="none" stroke="#333"/></svg></div>
      <div class="rsep"></div>
      <div class="rbtn d-flex align-items-center justify-content-center"><svg width="22" height="22"><g fill="#0a8a0a"><rect x="1" y="3" width="4" height="3"/><rect x="17" y="3" width="4" height="3"/><rect x="1" y="16" width="4" height="3"/><rect x="17" y="16" width="4" height="3"/></g><circle cx="9" cy="9" r="4.500" fill="#eee"/><path d="M8 15l8-6v6z" fill="#aaa"/></svg></div>
      <div class="rbtn d-flex align-items-center justify-content-center"><svg width="22" height="22"><g fill="#eee"><rect x="2" y="3" width="3" height="2"/><rect x="9" y="2" width="3" height="2"/><rect x="17" y="3" width="3" height="2"/><rect x="2" y="17" width="3" height="2"/><rect x="17" y="17" width="3" height="2"/><rect x="9" y="18" width="3" height="2"/></g><circle cx="9" cy="9" r="4.500" fill="#eee"/><path d="M8 15l8-6v6z" fill="#999"/></svg></div>
      <div class="rsep"></div>
      <div class="rbtn d-flex align-items-center justify-content-center"><svg width="12" height="16"><path d="M2 1v14l9-7z" fill="#eee"/></svg></div>
    </div>
  </div>

  <!-- paleta -->
  <div class="palette d-flex">
    <div class="xswatch"><svg width="33" height="33"><circle cx="16" cy="17" r="7" fill="#aaa"/><path d="M2 1l29 31M31 1L2 32" stroke="#c33c4a" stroke-width="2.400"/></svg></div>
    <div class="bswatch"></div>
    <div class="swatches d-flex" id="swatches"></div>
    <div class="d-flex align-items-start flex-none">
      <div class="palarrow d-flex justify-content-center" style="margin-top:4px"><svg width="14" height="9" fill="none"><path d="M1 8l6-6 6 6" stroke="#eee" stroke-width="2"/></svg></div>
      <div class="palarrow d-flex justify-content-center" style="margin-top:4px"><svg width="14" height="9" fill="none"><path d="M1 1l6 6 6-6" stroke="#eee" stroke-width="2"/></svg></div>
      <div class="palmenu d-flex flex-column align-items-center justify-content-center gap-1"><span class="dline" style="width:13px;height:2px"></span><span class="dline" style="width:13px;height:2px"></span><span class="dline" style="width:13px;height:2px"></span></div>
    </div>
  </div>

  <!-- barra de estado -->
  <div class="statusbar d-flex align-items-center">
    <div class="st-fill d-flex flex-column">
      <div class="st-line d-flex align-items-center"><span class="st-label">Relleno:</span><em>Ninguno</em></div>
      <div class="st-line d-flex align-items-center"><span class="st-label">Trazo:</span><span class="stroke-sw"></span><span>0.500</span></div>
    </div>
    <span style="width:16px;margin-left:7px">O:</span>
    <div class="spin d-flex align-items-center" style="width:73px"><span class="val">100</span><i>−</i><i class="off">+</i></div>
    <div class="layerbar"></div>
    <span style="width:65px">Capa 1</span>
    <svg width="18" height="18" style="margin-right:19px" fill="#ddd"><path d="M9 5c4 0 7 3 8 5-1 3-4 5-8 5s-7-2-8-5c1-2 4-5 8-5z"/><circle cx="9" cy="10" r="3" fill="#333"/><circle cx="9" cy="10" r="1.500"/><path d="M3 3l2 3M15 3l-2 3" stroke="#ddd" stroke-width="1.600"/></svg>
    <svg width="18" height="18" fill="#eee"><rect x="3" y="8" width="10" height="9"/><path d="M5 8V5a3.500 3.500 0 0 1 7 0" fill="none" stroke="#eee" stroke-width="2"/></svg>
    <div style="width:1px;height:26px;background:#3c3c3c;margin:0 7px 0 8px"></div>
    <span class="flex-grow-1 text-nowrap">Mover nodo -9.70 mm, -45.00 mm</span>
    <div class="st-coords d-flex flex-column justify-content-center">
      <div class="d-flex justify-content-between st-line align-items-center"><span>X:</span><span>50.00</span></div>
      <div class="d-flex justify-content-between st-line align-items-center"><span>Y:</span><span>115.00</span></div>
    </div>
    <span class="text-center" style="width:23px">Z:</span>
    <div class="spin d-flex align-items-center" style="width:99px"><span class="val zoomval">69%</span><i style="width:21px">−</i><i style="width:21px">+</i></div>
    <span class="text-center" style="width:23px">R:</span>
    <div class="spin d-flex align-items-center" style="width:107px"><span class="val ps-3">0.00°</span><i style="width:21px">−</i><i style="width:21px">+</i></div>
    <div style="width:15px"></div>
  </div>

  <!-- barra de tareas -->
  <div class="taskbar d-flex align-items-center">
    <div class="winlogo"><span></span><span></span><span></span><span></span></div>
    <div class="searchpill d-flex align-items-center"><svg width="18" height="18" fill="none" stroke="#222" stroke-width="1.500"><circle cx="7.500" cy="7.500" r="5.500"/><path d="M11.500 11.500l5 5"/></svg><span>Búsqueda</span></div>

    <div class="tslot d-flex align-items-center justify-content-center"><svg width="30" height="34"><ellipse cx="15" cy="19" rx="12.500" ry="14" fill="#f0960f"/><ellipse cx="17" cy="24" rx="9" ry="8" fill="#e2580c" opacity=".7"/></svg><span class="tbadge">1</span></div>
    <div class="tslot d-flex align-items-center justify-content-center"><svg width="32" height="30"><path d="M1 5a2 2 0 0 1 2-2h9l3 3h15a2 2 0 0 1 2 2v4H1z" fill="#e8a612"/><path d="M1 9h30v19a2 2 0 0 1-2 2H3a2 2 0 0 1-2-2z" fill="#fcd34f"/><rect x="9" y="22" width="14" height="8" rx="1.500" fill="#0e79cf"/></svg><span class="tdot"></span></div>
    <div class="tslot d-flex align-items-center justify-content-center"><svg width="32" height="32" viewBox="0 0 32 32"><circle cx="16" cy="16" r="15" fill="#34a853"/><path d="M16 1a15 15 0 0 1 13 7.500H16a7.500 7.500 0 0 0-6.500 3.800L3 8.500A15 15 0 0 1 16 1z" fill="#e4432f"/><path d="M29 8.500A15 15 0 0 1 16 31l6.500-11.300a7.500 7.500 0 0 0 0-11.200z" fill="#fbc02d"/><circle cx="16" cy="16" r="7" fill="#fff"/><circle cx="16" cy="16" r="5.500" fill="#3b78e7"/></svg><span class="tdot"></span></div>
    <div class="tslot d-flex align-items-center justify-content-center"><svg width="32" height="34"><rect x="1" y="1" width="21" height="22" rx="3" fill="#f3f3f3" stroke="#ddd"/><rect x="5" y="5" width="9" height="10" fill="none" stroke="#d3443a" stroke-width="2" stroke-dasharray="2 1.500"/><path d="M13 7l8 15M20 24l-6 0" stroke="#999" stroke-width="1.500"/><circle cx="25" cy="19" r="3" fill="none" stroke="#1793e3" stroke-width="1.600"/><circle cx="17" cy="30" r="3" fill="none" stroke="#1793e3" stroke-width="1.600"/><path d="M17 27v-6M22 20h-6" stroke="#1793e3" stroke-width="1.500"/></svg></div>
    <div class="tslot d-flex align-items-center justify-content-center"><svg width="32" height="34"><ellipse cx="16" cy="17" rx="15" ry="16.500" fill="#fff"/><path d="M7 22L21 5c4 1 6 5 6 9L7 22z" fill="#2d2d2d"/><path d="M9 25l16-9c0 7-4 13-9 13-3 0-5-2-7-4z" fill="#f0702a"/></svg></div>
    <div class="tslot d-flex align-items-center justify-content-center"><svg width="30" height="32" viewBox="0 0 30 32"><path d="M22 1l8 4v22l-8 4L8 18l-5 4-3-2V12l3-2 5 4z" fill="#1a8ee0"/><path d="M22 1l8 4v22l-8 4z" fill="#2ba8ef"/><path d="M22 9v14l-9-7z" fill="#fff"/><path d="M3 12l4.500 4L3 20z" fill="#fff"/></svg><span class="tdot"></span></div>
    <div class="tslot d-flex align-items-center justify-content-center"><div class="d-flex align-items-center justify-content-center fw-bold text-white" style="width:30px;height:38px;background:#1c33a6;border-radius:6px;font-size:20px;font-family:'Liberation Sans',sans-serif">Ki</div><span class="tdot"></span></div>
    <div class="tslot d-flex align-items-center justify-content-center"><svg width="32" height="36"><path d="M2 1h15l-2 5H8v8h7l-1 5H8v13l-6 2z" fill="#b61c1c"/><circle cx="21" cy="24" r="8" fill="#4d7aa8"/><circle cx="21" cy="24" r="8" fill="none" stroke="#7697b8" stroke-width="3" stroke-dasharray="3 2"/><circle cx="21" cy="24" r="3.200" fill="#dfe6ee"/></svg><span class="tdot"></span></div>
    <div class="tslot d-flex align-items-center justify-content-center"><svg width="32" height="32"><rect x="4" y="2" width="26" height="28" rx="2" fill="#2b7cd3"/><rect x="4" y="9" width="26" height="7" fill="#41a5ee"/><rect x="4" y="16" width="26" height="7" fill="#2b7cd3"/><rect x="4" y="23" width="26" height="7" rx="1" fill="#103f91"/><rect x="0" y="7" width="16" height="16" rx="1" fill="#185abd"/><text x="8" y="20" fill="#fff" font-size="13" font-weight="700" text-anchor="middle" font-family="Liberation Sans">W</text></svg><span class="tdot"></span></div>
    <div class="tslot now d-flex align-items-center justify-content-center"><svg width="32" height="34" viewBox="0 0 32 34"><path d="M16 1L30 15l-3 2-2-1-1 3h-4l-1 3-3-2-2 3-3-3-1-4-3 1-5-3z" fill="#111"/><path d="M16 1l6 6-4 2-3-1-3 2-2-2z" fill="#8d8d8d"/><path d="M10 25c3 2 9 2 13 0l-3 5h-2l-2 3-3-2-3 0z" fill="#222"/><circle cx="8" cy="24" r="1.800" fill="#222"/></svg><span class="tdot"></span></div>
    <div class="tslot d-flex align-items-center justify-content-center"><svg width="30" height="32"><rect x="1" y="1" width="28" height="30" rx="4" fill="#b30b00"/><path d="M7 25c4-3 6-11 6-17 0-2 2-2 2 0 0 6 3 10 9 11 2 1 0 3-3 2-5-1-11 0-14 4z" fill="none" stroke="#fff" stroke-width="1.600"/></svg><span class="tdot"></span></div>
    <div class="tslot d-flex align-items-center justify-content-center"><svg width="32" height="32"><circle cx="18" cy="16" r="14" fill="#ed6c47"/><path d="M18 2a14 14 0 0 1 14 14H18z" fill="#ff8f6b"/><path d="M18 16h14a14 14 0 0 1-14 14z" fill="#d35230"/><rect x="0" y="8" width="16" height="16" rx="1.500" fill="#c43e1c"/><text x="8" y="21" fill="#fff" font-size="13" font-weight="700" text-anchor="middle" font-family="Liberation Sans">P</text></svg><span class="tdot"></span></div>

    <div class="tray d-flex align-items-center">
      <div class="trayslot d-flex align-items-center justify-content-center" style="width:39px"><svg width="14" height="9" fill="none"><path d="M1 8l6-6 6 6" stroke="#222" stroke-width="1.500"/></svg></div>
      <div class="trayslot d-flex align-items-center justify-content-center" style="width:39px"><svg width="22" height="24" fill="none" stroke="#e5751a" stroke-width="3"><circle cx="13" cy="9" r="6"/><path d="M9 14l-7 8"/></svg></div>
      <div class="trayslot d-flex align-items-center justify-content-center" style="width:39px"><svg width="18" height="26" fill="none" stroke="#333" stroke-width="1.100"><rect x="2" y="8" width="10" height="16" rx="2"/><rect x="3.500" y="1" width="7" height="7"/><path d="M11 22l2 2 4-5"/></svg></div>
      <div class="trayslot langs d-flex flex-column justify-content-center"><span>ESP</span><span>LAA</span></div>
      <div class="trayslot d-flex align-items-center justify-content-center" style="width:30px;margin-left:2px"><svg width="22" height="18" fill="none" stroke="#333" stroke-width="1.400"><path d="M1 6a14 14 0 0 1 20 0M4 9.500a10 10 0 0 1 14 0M7 13a5.500 5.500 0 0 1 8 0"/><circle cx="11" cy="16" r="1.200" fill="#333"/></svg></div>
      <div class="trayslot d-flex align-items-center justify-content-center" style="width:30px"><svg width="22" height="20" fill="none" stroke="#333" stroke-width="1.200"><path d="M2 7h3l5-4v14l-5-4H2zM13 7c1 2 1 4 0 6M16 4c2 4 2 8 0 12M19 3c2 4 2 10 0 14"/></svg></div>
      <div class="trayslot d-flex align-items-center justify-content-center" style="width:30px"><svg width="22" height="20"><rect x="1.500" y="5.500" width="17" height="11" rx="2" fill="#333" stroke="#333"/><rect x="19" y="8" width="2" height="6" fill="#333"/><path d="M8 1L3 9h4l-2 6" stroke="#d9d9d9" stroke-width="1.200" fill="none"/></svg></div>
      <div class="trayslot clock d-flex flex-column justify-content-center"><span>10:09 a.m.</span><span>02/10/2024</span></div>
      <div class="trayslot d-flex align-items-center justify-content-center" style="width:34px;margin-right:18px"><svg width="20" height="24"><path d="M10 2a6 6 0 0 1 6 6c0 5 1 7 3 9H1c2-2 3-4 3-9a6 6 0 0 1 6-6z" fill="#0a4ea3"/><path d="M7.500 19a2.500 2.500 0 0 0 5 0z" fill="#0a4ea3"/></svg></div>
    </div>
  </div>
</div>

<script>
  // reglas y lienzo: 2.612 px por mm, origen de pagina en x=436, y=101
  const SCALE = 2.612, OX = 436, OY = 101;
  const hr = document.getElementById('hruler');
  const vr = document.getElementById('vruler');
  const cv = document.getElementById('canvas');

  function tickLen(i) {
    if (i % 10 === 0) return 17;
    if (i % 5 === 0) return 10;
    return i % 2 === 0 ? 7 : 4;
  }

  let h = '<rect width="1253" height="25" fill="#2f2f2f"/><rect x="' + (OX - 59) + '" width="548.500" height="25" fill="#1c1e1e"/>';
  for (let i = -58; i * 2.5 < 340; i++) {
    const x = Math.round(OX - 59 + i * 2.5 * SCALE) + 0.5;
    h += '<path d="M' + x + ' 25v-' + tickLen(Math.abs(i)) + '" stroke="#e8e8e8"/>';
    if (i % 10 === 0) h += '<text x="' + (x + 2) + '" y="18" font-size="12.500" fill="#c8c8c8">' + (i * 2.5) + '</text>';
  }
  h += '<path d="M' + (501 - 59) + ' 17h143.700" stroke="#1c7fc9" stroke-width="2.500"/>';
  h += '<circle cx="' + (501 - 59) + '" cy="17" r="3.200" fill="#2f2f2f" stroke="#1c7fc9" stroke-width="1.800"/>';
  h += '<circle cx="' + (644.700 - 59) + '" cy="17" r="3.200" fill="#2f2f2f" stroke="#1c7fc9" stroke-width="1.800"/>';
  h += '<path d="M' + (560 - 59) + ' 21h10l-5 4z" fill="#eee"/>';
  hr.innerHTML = h;

  let v = '<rect width="24" height="798" fill="#2f2f2f"/><rect width="24" height="752" fill="#1c1e1e"/>';
  for (let i = -4; i * 2.5 < 310; i++) {
    const y = Math.round(OY - 125 + i * 2.5 * SCALE) + 0.5;
    v += '<path d="M24 ' + y + 'h-' + tickLen(Math.abs(i)) + '" stroke="#e8e8e8"/>';
    if (i % 10 === 0 && i > 0) v += '<text transform="translate(17 ' + (y + 2) + ') rotate(-90)" text-anchor="end" font-size="12.500" fill="#c8c8c8">' + (i * 2.5) + '</text>';
  }
  v += '<path d="M17 ' + (284 - 125) + 'v444.600" stroke="#1c7fc9" stroke-width="2.500"/>';
  v += '<circle cx="17" cy="' + (282 - 125) + '" r="3.200" fill="#1c1e1e" stroke="#1c7fc9" stroke-width="1.800"/>';
  v += '<circle cx="17" cy="' + (729 - 125) + '" r="3.200" fill="#1c1e1e" stroke="#1c7fc9" stroke-width="1.800"/>';
  v += '<path d="M20 ' + (397 - 125) + 'l4 4-4 4z" fill="#eee"/>';
  vr.innerHTML = v;

  let c = '<rect x="59" y="125" width="1253" height="798" fill="#d1d1d1"/>';
  c += '<rect x="984" y="106" width="4" height="775" fill="#bdbdbd"/><rect x="984" y="106" width="2" height="773" fill="#a6a6a6"/>';
  c += '<rect x="440" y="877" width="548" height="4" fill="#bdbdbd"/><rect x="440" y="877" width="546" height="2" fill="#a6a6a6"/>';
  c += '<rect x="' + OX + '" y="' + OY + '" width="548.500" height="776" fill="#fff"/>';
  let g = '';
  for (let i = -29; i < 68; i++) {
    const x = Math.round(OX + i * 5 * SCALE) + 0.5;
    g += 'M' + x + ' 125V923';
  }
  for (let i = 0; i < 64; i++) {
    const y = Math.round(OY + i * 5 * SCALE) + 0.5;
    g += 'M59 ' + y + 'H1312';
  }
  c += '<path d="' + g + '" stroke="#3fa9e8" stroke-opacity=".42" fill="none"/>';
  // elipses y trayecto, un pixel abajo respecto a la rejilla
  c += '<g transform="translate(0 1)">';
  c += '<g fill="none" stroke="#111" stroke-width="1.300"><ellipse cx="716.500" cy="284" rx="216" ry="78.500"/><ellipse cx="715.500" cy="519.500" rx="124" ry="26"/><ellipse cx="716.500" cy="728.800" rx="72" ry="13"/>';
  c += '<path d="M501 284C515 313 535 340 545 368C558 405 570 440 580 475L644.500 729"/></g>';
  c += '<path d="M501 284L565.700 401L644.500 728.500" fill="none" stroke="#6a6af0" stroke-width="1.200"/>';
  c += '<rect x="500" y="284" width="144.500" height="444.600" fill="none" stroke="#3344dd" stroke-dasharray="4 4"/>';
  [[522.600,323],[544.500,362.500],[591.500,510.500],[618.500,619.500]].forEach(p => {
    c += '<circle cx="' + p[0] + '" cy="' + p[1] + '" r="6" fill="none" stroke="#111" stroke-width="1.100"/>';
  });
  c += '<rect x="565" y="381" width="167" height="18" fill="#5a5a9e" fill-opacity=".6"/>';
  c += '<text x="568" y="394" font-family="Liberation Sans" font-size="10" fill="#e6e6f0">Nodo vértice a intersección de rejilla</text>';
  c += '<path d="M501 277.500l6.500 6.500-6.500 6.500-6.500-6.500z" fill="#bdbdbd" stroke="#222"/>';
  c += '<path d="M644.700 722l6.500 6.500-6.500 6.500-6.500-6.500z" fill="#bdbdbd" stroke="#222"/>';
  c += '<path d="M565.700 394l6.500 7-6.500 7-6.500-7z" fill="#f00" stroke="#111"/>';
  c += '</g>';
  cv.innerHTML = c;

  // paleta
  const colors = ['#000000','#1a1a1a','#333333','#4d4d4d','#666666','#808080','#999999','#b3b3b3','#cccccc','#e6e6e6','#ececec','#f2f2f2','#f9f9f9','#ffffff',
    '#800000','#ff0000','#808000','#ffff00','#008000','#00ff00','#008080','#00ffff','#000080','#800080','#ff00ff',
    '#2b0000','#550000','#800000','#aa0000','#d40000','#ff0000','#ff2a2a','#ff5555','#ff8080','#ffaaaa','#ffd5d5',
    '#280b0b','#501616','#782121','#a02c2c','#c83737','#d35f5f','#de8787','#e9afaf','#f4d7d7',
    '#241c1c','#483737','#6c5353','#916f6f','#ac9393','#c8b7b7','#e3dbdb',
    '#2b1100','#552200','#803300','#aa4400','#d45500','#ff6600','#ff7f2a','#ff9955','#ffb380','#ffccaa','#ffe6d5',
    '#28170b','#502d16','#784421','#a05a2c','#c87137','#d38d5f','#deaa87','#e9c6af','#f4e3d7',
    '#241f1c','#483e37','#6c5d53','#917c6f','#ac9d93','#c8beb7','#e3dedb',
    '#2b2200','#554400','#806600','#aa8800','#d4aa00','#ffcc00','#ffd42a','#ffdd55','#ffe680','#ffeeaa','#fff6d5',
    '#28220b','#504416','#786721','#a0892c','#c8ab37','#d3bc5f','#decd87','#e9ddaf','#f4eed7',
    '#24241c','#484837','#6c6c53','#91916f','#acac93'];
  const sw = document.getElementById('swatches');
  colors.forEach((col, i) => {
    const s = document.createElement('span');
    s.style.background = col;
    if (i === 0) s.innerHTML = '<b class="ring"></b>';
    sw.appendChild(s);
  });
</script>
<script src="https://cdn.jsdelivr.net/npm/bootstrap@5.3.0/dist/js/bootstrap.bundle.min.js"></script>
</body>
</html>
